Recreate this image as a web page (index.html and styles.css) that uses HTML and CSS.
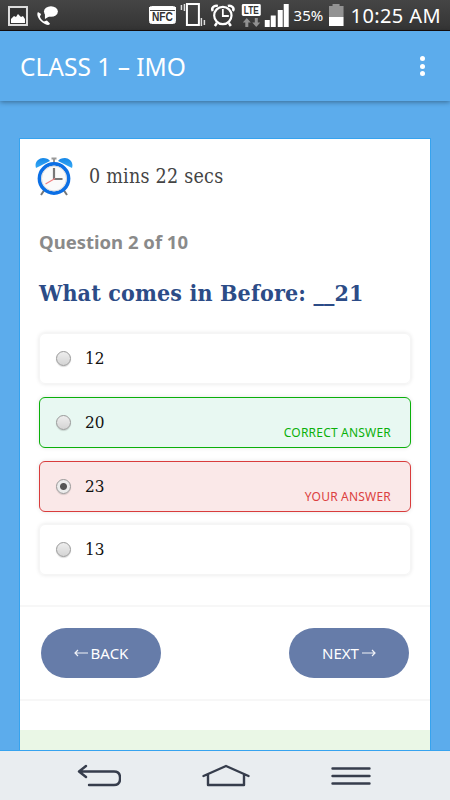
FILE: index.html
```html
<!DOCTYPE html>
<html lang="en">
<head>
    <meta charset="UTF-8">
    <meta name="viewport" content="width=device-width, initial-scale=1.0">
    <title>CLASS 1 - IMO</title>
    <link rel="stylesheet" href="styles.css">
</head>
<body>
    <div class="status-bar">
        <svg class="status-left" width="60" height="30" viewBox="0 0 60 30">
            <rect x="2" y="7" width="18" height="18" fill="#333" stroke="#ddd" stroke-width="2"/>
            <path d="M4 23v-4l3-3 2 1 2-3 3 3 2-1 2 3v4z" fill="#fff"/>
            <path d="M31 12c-2 3 1 9 7 12 3 1.500 5 1 5-.500l-3-3-3 1c-2-1-3.500-3-4-5l1.200-2.500z" fill="#fff"/>
            <ellipse cx="44" cy="11.500" rx="7" ry="5.300" fill="#fff"/>
            <path d="M38 13v6l5-3z" fill="#fff"/>
        </svg>
        <!-- NFC, vibrate, alarm, LTE, signal -->
        <svg class="status-icons" width="142" height="30" viewBox="0 0 142 30">
            <rect x="1.500" y="6.500" width="26" height="17" rx="2" fill="none" stroke="#fff"/>
            <path d="M1 7h27v3H1z" fill="#fff"/>
            <rect x="2" y="11" width="25" height="12" fill="#fff"/>
            <text class="nfc" x="4" y="21.500" textLength="21" lengthAdjust="spacingAndGlyphs">NFC</text>
            <rect x="39" y="4" width="12" height="21" fill="none" stroke="#fff" stroke-width="2"/>
            <path d="M36.500 4v7M33.500 5v5M53.500 18v8M56.500 20v5" stroke="#ddd" stroke-width="1.500"/>
            <g fill="none" stroke="#fff">
                <circle cx="75" cy="15.500" r="8.700" stroke-width="2.200"/>
                <path d="M75 9v7h6" stroke-width="1.800"/>
                <path d="M65 11c-2-3 1-6 5-5M85 11c2-3-1-6-5-5M69 23l-2 3M81 23l2 3" stroke-width="2.500"/>
            </g>
            <rect x="94" y="4" width="19" height="12" rx="1.500" fill="#fff"/>
            <text class="lte" x="96" y="14" textLength="15" lengthAdjust="spacingAndGlyphs">LTE</text>
            <path d="M99 18l4 4.500h-2.500V27h-3v-4.500H95zM108.500 27l-4-4.500h2.500V18h3v4.500h2.500z" fill="#919191"/>
            <path d="M117 20h5v7h-5zM123 15.500h5V27h-5zM130 10h5v17h-5zM136 4h5v23h-5z" fill="#fff"/>
        </svg>
        <span class="percent">35%</span>
        <span class="battery"></span>
        <span class="clock">10:25 AM</span>
    </div>

    <div class="header">
        <h1>CLASS 1 – IMO</h1>
        <div class="menu"><i></i><i></i><i></i></div>
    </div>

    <div class="content">
        <div class="card">
            <div class="timer">
                <svg width="38" height="39" viewBox="0 0 38 39">
                    <defs>
                        <linearGradient id="bell" x2="0" y2="1">
                            <stop stop-color="#1687e8"/>
                            <stop offset="1" stop-color="#35aaf5"/>
                        </linearGradient>
                    </defs>
                    <path d="M10 32l-4 6M28 32l4 6" stroke="#777" stroke-width="2"/>
                    <path d="M19 6V2M16.500 1.500h5" stroke="#999" stroke-width="2"/>
                    <path d="M1 11C-1 5 4 1 8 1c3 0 6 1 7 3zM37 11c2-6-3-10-7-10-3 0-6 1-7 3z" fill="url(#bell)"/>
                    <circle cx="19" cy="21.500" r="14.600" fill="#fafafa" stroke="#0b6fe5" stroke-width="3.600"/>
                    <circle cx="19" cy="21.500" r="12.500" fill="none" stroke="#d5d8de"/>
                    <path d="M19 11v11h8.500" fill="none" stroke="#777" stroke-width="2.200"/>
                    <path d="M20 21.500L10.500 27" stroke="#f08080" stroke-width="1.200"/>
                </svg>
                <span class="time">0 mins 22 secs</span>
            </div>

            <h3>Question 2 of 10</h3>
            <h2>What comes in Before: __21</h2>

            <div class="options">
                <label class="option">
                    <span class="radio"></span>
                    <span class="answer">12</span>
                </label>
                <label class="option correct">
                    <span class="radio"></span>
                    <span class="answer">20</span>
                    <span class="note">CORRECT ANSWER</span>
                </label>
                <label class="option wrong">
                    <span class="radio checked"></span>
                    <span class="answer">23</span>
                    <span class="note">YOUR ANSWER</span>
                </label>
                <label class="option">
                    <span class="radio"></span>
                    <span class="answer">13</span>
                </label>
            </div>

            <div class="buttons">
                <button>
                    <svg width="14" height="8" viewBox="0 0 14 8"><path d="M1 4h13M4 1L1 4l3 3"/></svg>
                    <span class="back">BACK</span>
                </button>
                <button>
                    <span class="next">NEXT</span>
                    <svg width="14" height="8" viewBox="0 0 14 8"><path d="M0 4h13M10 1l3 3-3 3"/></svg>
                </button>
            </div>
            <div class="explanation"></div>
        </div>
    </div>

    <div class="nav-bar">
        <svg width="44" height="24" viewBox="0 0 44 24">
            <path d="M9 2L2 7.500 9 13M2 7.500h35q6 0 6 6v1.500q0 6-6 6H12"/>
        </svg>
        <svg width="48" height="24" viewBox="0 0 48 24">
            <path d="M1.500 12L24 2l22.500 10M6 11v10h36V11"/>
        </svg>
        <svg width="40" height="24" viewBox="0 0 40 24">
            <path d="M1.500 4.500h37M1.500 12h37M1.500 19.500h37"/>
        </svg>
    </div>
</body>
</html>
```

FILE: styles.css
```css
* {
    box-sizing: border-box;
}

body {
    margin: 0;
    height: 800px;
    display: flex;
    flex-direction: column;
    overflow: hidden;
    background-color: #5cacec;
    font-family: "Noto Sans", sans-serif;
}

.status-bar {
    height: 31px;
    flex: none;
    display: flex;
    align-items: center;
    padding: 0 9px 0 7px;
    background: linear-gradient(#454545, #343434);
    border-bottom: 1px solid #160d0d;
    color: #fff;
}

.status-icons {
    margin-left: 81px;
}

.nfc, .lte {
    font-family: "Liberation Sans", sans-serif;
    font-size: 12px;
    font-weight: bold;
    fill: #333;
}

.lte {
    font-size: 11px;
}

.percent {
    width: 31px;
    margin-left: 4px;
    font-size: 15px;
    white-space: nowrap;
}

.battery {
    width: 15px;
    height: 22px;
    margin-left: 4px;
    flex: none;
    background: linear-gradient(#929292 60%, #fff 60%);
    clip-path: polygon(4px 0, 11px 0, 11px 2px, 15px 2px, 15px 22px, 0 22px, 0 2px, 4px 2px);
}

.clock {
    margin-left: 7px;
    font-size: 20px;
    letter-spacing: 0.4px;
    white-space: nowrap;
}

.header {
    height: 70px;
    flex: none;
    display: flex;
    align-items: center;
    justify-content: space-between;
    padding: 0 25px 0 20px;
    background-color: #5cacec;
    box-shadow: 0 1px 5px rgba(0, 0, 0, 0.4);
}

.header h1 {
    margin: 0;
    font-size: 24.5px;
    font-weight: normal;
    color: #fff;
}

.menu {
    display: flex;
    flex-direction: column;
    gap: 2.5px;
}

.menu i {
    width: 5px;
    height: 5px;
    border-radius: 50%;
    background-color: #fff;
}

.content {
    flex: 1;
    padding: 38px 20px 0;
}

.card {
    height: 611px;
    background-color: #fff;
    outline: 1px solid #36a3ef;
}

.timer {
    display: flex;
    align-items: center;
    height: 75px;
    padding: 0 0 0 15px;
    gap: 16px;
}

.time, h2, .answer {
    font-family: "DejaVu Serif Condensed", "DejaVu Serif", serif;
    font-stretch: condensed;
}

.time {
    font-size: 19.5px;
    letter-spacing: 0.25px;
    color: #444;
}

h3 {
    margin: 13px 19px 0;
    font-size: 18.5px;
    line-height: 29px;
    color: #8a8a8a;
}

h2 {
    margin: 21px 19px 0;
    font-size: 23px;
    line-height: 32px;
    letter-spacing: 0.15px;
    color: #2c4c87;
    white-space: nowrap;
}

.options {
    display: grid;
    gap: 12.7px;
    padding: 24.2px 19px 30px;
}

.option {
    display: flex;
    align-items: center;
    height: 51px;
    padding: 0 19px 0 16px;
    border: 1px solid #f5f5f5;
    border-radius: 6px;
    box-shadow: 0 0 4px rgba(0, 0, 0, 0.1);
}

.correct {
    background-color: #e8f8f2;
    border-color: #0ab00a;
}

.wrong {
    background-color: #fae8e8;
    border-color: #d93c3c;
}

.radio {
    width: 15px;
    height: 15px;
    border: 1px solid #999;
    border-radius: 50%;
    background: linear-gradient(#eee, #d4d4d4);
    box-shadow: 0 1px 1px rgba(0, 0, 0, 0.15);
}

.radio.checked {
    background: radial-gradient(circle, #555 3px, #ececec 4px);
}

.answer {
    margin: 0 0 1px 14px;
    font-size: 17px;
    color: #111;
}

.note {
    align-self: flex-end;
    margin: 0 0 5px auto;
    font-size: 12px;
    line-height: 18px;
    letter-spacing: 0.2px;
    color: #0ab00a;
}

.wrong .note {
    color: #dc4040;
}

.buttons {
    display: flex;
    justify-content: space-between;
    height: 96px;
    padding: 21px 21px;
    border-top: 2px solid #f7f7f7;
    border-bottom: 2px solid #f7f7f7;
}

button {
    display: flex;
    align-items: center;
    justify-content: center;
    gap: 3px;
    width: 120px;
    height: 50px;
    padding: 0;
    border: 0;
    border-radius: 25px;
    background-color: #667ca9;
    color: #fff;
    font-family: "Noto Sans", sans-serif;
    font-size: 15px;
}

button svg {
    fill: none;
    stroke: #f0f2f7;
    stroke-width: 1.2;
}

.explanation {
    height: 20px;
    margin-top: 29px;
    background-color: #eaf7e6;
}

.nav-bar {
    height: 50px;
    flex: none;
    display: flex;
    align-items: center;
    justify-content: space-between;
    padding: 0 79px 0 77px;
    background-color: #e9edf0;
    border-top: 1px solid #36a3ef;
}

.nav-bar svg {
    fill: none;
    stroke: #363d4c;
    stroke-width: 2.4;
    stroke-linecap: round;
    stroke-linejoin: round;
}
```
